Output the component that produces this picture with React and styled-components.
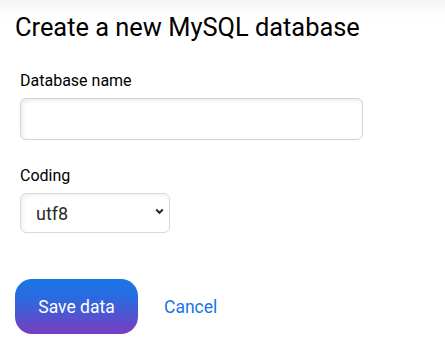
import React from 'react';
import styled, { createGlobalStyle } from 'styled-components';

const GlobalStyle = createGlobalStyle`
   body {
      margin: 0;
      background: linear-gradient(180deg, #f4f5f8 0px, #fbfbfc 10px, #fff 20px) no-repeat;
      background-color: #fff;
      font-family: 'Roboto', 'Liberation Sans', sans-serif;
   }
`;

const Page = styled.div`
   padding: 12px 15px 0 15px;
`;

const Title = styled.h1`
   font-size: 25.4px;
   font-weight: 400;
   color: #000;
   margin: 0 0 29px 0;
   line-height: 30px;
`;

const Form = styled.form`
   display: flex;
   flex-direction: column;
   padding-left: 5px;
`;

const Field = styled.div`
   display: flex;
   flex-direction: column;
   align-items: flex-start;
   margin-bottom: ${props => props.last ? '46px' : '26px'};
`;

const Label = styled.label`
   font-size: 16px;
   color: #000;
   line-height: 19px;
   margin-bottom: 8px;
`;

const TextInput = styled.input`
   box-sizing: border-box;
   width: 343px;
   height: 42px;
   border: 1px solid #d2d2d2;
   border-radius: 6px;
   box-shadow: inset 2px 2px 4px rgba(0,0,0,0.08);
   outline: none;
   font-family: inherit;
   font-size: 16px;
   padding: 0 12px;
`;

const SelectWrap = styled.div`
   position: relative;
   width: 150px;
   height: 40px;
`;

const Select = styled.select`
   appearance: none;
   -webkit-appearance: none;
   box-sizing: border-box;
   width: 100%;
   height: 100%;
   border: 1px solid #d9d9d9;
   border-radius: 6px;
   box-shadow: inset 2px 2px 4px rgba(0,0,0,0.06);
   background: #fff;
   font-family: inherit;
   font-size: 18px;
   color: #2b2b2b;
   padding: 0 24px 0 15px;
   outline: none;
`;

const Chevron = styled.svg`
   position: absolute;
   right: 6px;
   top: 15px;
   width: 9px;
   height: 7px;
   pointer-events: none;
`;

const Actions = styled.div`
   display: flex;
   align-items: center;
   gap: 26px;
   margin-left: -5px;
`;

const SaveButton = styled.button`
   width: 123px;
   height: 55px;
   border: none;
   border-radius: 17px;
   background: linear-gradient(180deg, #1976e6 0%, #2a6ae0 35%, #7b3cc0 100%);
   color: #fff;
   font-family: inherit;
   font-size: 17.5px;
   cursor: pointer;
`;

const CancelLink = styled.a`
   color: #1a73e8;
   font-size: 17.5px;
   text-decoration: none;
   cursor: pointer;
`;

export default function App() {
   return (
      <Page>
         <GlobalStyle />
         <Title>Create a new MySQL database</Title>
         <Form onSubmit={e => e.preventDefault()}>
            <Field>
               <Label>Database name</Label>
               <TextInput type="text" />
            </Field>
            <Field last>
               <Label>Coding</Label>
               <SelectWrap>
                  <Select defaultValue="utf8">
                     <option value="utf8">utf8</option>
                     <option value="latin1">latin1</option>
                  </Select>
                  <Chevron viewBox="0 0 9 7">
                     <path d="M1.2 1.5 L4.5 4.8 L7.8 1.5" fill="none" stroke="#2b2b2b" strokeWidth="2" />
                  </Chevron>
               </SelectWrap>
            </Field>
            <Actions>
               <SaveButton type="submit">Save data</SaveButton>
               <CancelLink>Cancel</CancelLink>
            </Actions>
         </Form>
      </Page>
   );
}
